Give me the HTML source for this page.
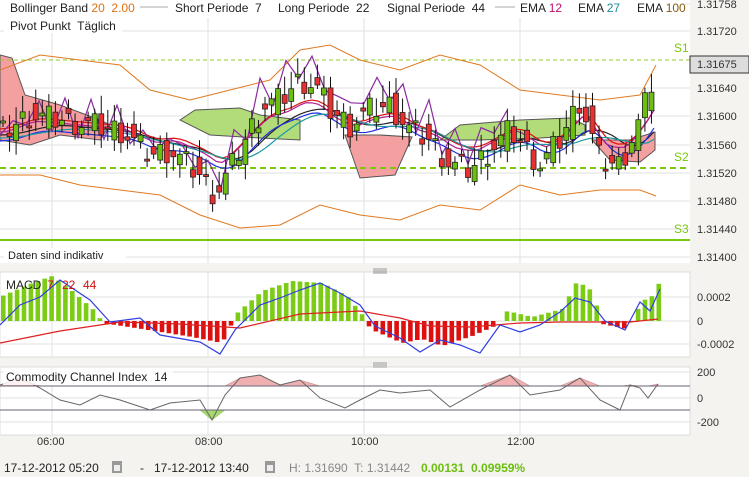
<!DOCTYPE html>
<html><head><meta charset="utf-8"><style>
body{margin:0;width:749px;height:477px;overflow:hidden;background:#f4f3ef;font-family:"Liberation Sans",sans-serif;}
svg{position:absolute;left:0;top:0}
text{font-family:"Liberation Sans",sans-serif;white-space:pre}
</style></head><body>
<svg id="s" width="749" height="477" xmlns="http://www.w3.org/2000/svg">
<rect x="0" y="0" width="690" height="263" fill="#fff"/>
<rect x="0" y="272" width="690" height="85" fill="#fff" stroke="#ddd"/>
<rect x="0" y="367" width="690" height="68" fill="#fff" stroke="#ddd"/>
<g id="grid" stroke="#e2e2e2" stroke-width="1"></g>
<g id="main"></g>
<g font-size="12" fill="#222">
<rect x="0" y="0" width="685" height="17" fill="#fff"/>
<text x="10" y="12">Bollinger Band <tspan fill="#e07010">20  2.00</tspan></text>
<line x1="140" x2="168" y1="7" y2="7" stroke="#aaa"/>
<text x="175" y="12">Short Periode  7</text>
<text x="278" y="12">Long Periode  22</text>
<text x="387" y="12">Signal Periode  44</text>
<line x1="495" x2="515" y1="7" y2="7" stroke="#aaa"/>
<text x="520" y="12">EMA <tspan fill="#c0106a">12</tspan></text>
<text x="578" y="12">EMA <tspan fill="#1a8a9a">27</tspan></text>
<text x="637" y="12">EMA <tspan fill="#8a5a10">100</tspan></text>
<rect x="4" y="18" width="118" height="15" fill="#fff"/>
<text x="10" y="30">Pivot Punkt  Täglich</text>
<rect x="4" y="248" width="122" height="13" fill="#fff"/>
<text x="8" y="259" font-size="11">Daten sind indikativ</text>
<text x="674" y="52" fill="#7ac70c">S1</text>
<text x="674" y="161" fill="#7ac70c">S2</text>
<text x="674" y="233" fill="#7ac70c">S3</text>
</g>
<g font-size="11" fill="#333">
<text x="697" y="8">1.31758</text><text x="697" y="35">1.31720</text>
<rect x="690" y="56" width="59" height="17" fill="#ddd" stroke="#333"/>
<text x="697" y="68">1.31675</text>
<text x="697" y="92">1.31640</text><text x="697" y="120">1.31600</text><text x="697" y="149">1.31560</text><text x="697" y="177">1.31520</text><text x="697" y="205">1.31480</text><text x="697" y="233">1.31440</text><text x="697" y="261">1.31400</text>
<text x="697" y="301">0.0002</text><text x="697" y="325">0</text><text x="697" y="348">-0.0002</text>
<text x="697" y="376">200</text><text x="697" y="402">0</text><text x="697" y="426">-200</text>
<text x="37" y="445">06:00</text><text x="195" y="445">08:00</text><text x="351" y="445">10:00</text><text x="507" y="445">12:00</text>
</g>
<g stroke="#999"><line x1="373" x2="387" y1="269" y2="269"/><line x1="373" x2="387" y1="271" y2="271"/><line x1="373" x2="387" y1="273" y2="273"/>
<line x1="373" x2="387" y1="363" y2="363"/><line x1="373" x2="387" y1="365" y2="365"/><line x1="373" x2="387" y1="367" y2="367"/></g>
<g font-size="12">
<text x="6" y="289" fill="#222">MACD</text><text x="47" y="289" fill="#d01010">7</text><text x="62" y="289" fill="#d01010">22</text><text x="83" y="289" fill="#d01010">44</text>
<rect x="3" y="369" width="170" height="16" fill="#fff" opacity=".85"/>
<text x="6" y="381" fill="#222">Commodity Channel Index  14</text>
<text x="4" y="472" fill="#222">17-12-2012 05:20</text>
<rect x="112" y="461" width="10" height="12" fill="#999"/><rect x="114" y="465" width="6" height="6" fill="#eee"/>
<text x="140" y="472" fill="#222">-   17-12-2012 13:40</text>
<rect x="265" y="461" width="10" height="12" fill="#999"/><rect x="267" y="465" width="6" height="6" fill="#eee"/>
<text x="289" y="472" fill="#888">H: 1.31690  T: 1.31442</text>
<text x="421" y="472" fill="#6cbf10" font-weight="bold">0.00131  0.09959%</text>
</g>
</svg>
<script>
(function(){
var NS="http://www.w3.org/2000/svg",M=document.getElementById('main'),G=document.getElementById('grid');
function el(t,a,p){var e=document.createElementNS(NS,t);for(var k in a)e.setAttribute(k,a[k]);(p||M).appendChild(e);return e;}
[4,31,88,116,145,173,201,229,257,297,321,344,372,386,398,410,422].forEach(function(y){el('line',{x1:0,x2:690,y1:y,y2:y},G)});
[52,208,364,520].forEach(function(x){el('line',{x1:x,x2:x,y1:18,y2:263},G);el('line',{x1:x,x2:x,y1:272,y2:357},G);el('line',{x1:x,x2:x,y1:367,y2:435},G)});
function interp(pts,x){if(x<=pts[0][0])return pts[0][1];for(var i=0;i<pts.length-1;i++){if(x<=pts[i+1][0]){var t=(x-pts[i][0])/(pts[i+1][0]-pts[i][0]);return pts[i][1]+t*(pts[i+1][1]-pts[i][1]);}}return pts[pts.length-1][1];}
function path(pts,c,w,fill){var d='M'+pts.map(function(p){return p[0]+','+p[1]}).join('L');return el('path',{d:d,stroke:c,'stroke-width':w||1,fill:fill||'none'});}
function poly(up,lo,c){var d='M'+up.map(function(p){return p[0]+','+p[1]}).join('L')+'L'+lo.slice().reverse().map(function(p){return p[0]+','+p[1]}).join('L')+'Z';el('path',{d:d,fill:c,stroke:'#555','stroke-width':1});}
poly([[0,55],[12,58],[25,95],[60,105],[100,120],[110,125]],[[0,140],[30,145],[60,135],[100,140],[110,125]],'#f5a0a0');
poly([[180,120],[195,110],[240,108],[260,115],[300,120]],[[180,120],[210,135],[260,138],[300,140]],'#b2dc7a');
poly([[345,135],[380,135],[412,137]],[[345,135],[360,178],[395,175],[412,137]],'#f5a0a0');
poly([[440,140],[460,125],[520,120],[570,118],[585,125]],[[440,140],[480,140],[540,138],[585,135]],'#b2dc7a');
poly([[592,140],[630,140],[655,132]],[[592,140],[610,160],[640,162],[655,150]],'#f5a0a0');
el('line',{x1:0,x2:690,y1:60,y2:60,stroke:'#8ccc30','stroke-dasharray':'4,3'});
el('line',{x1:0,x2:690,y1:168,y2:168,stroke:'#7ac70c','stroke-width':2,'stroke-dasharray':'6,4'});
el('line',{x1:0,x2:690,y1:240,y2:240,stroke:'#7ac70c','stroke-width':2});
var P=[[0,135],[30,115],[60,120],[90,125],[120,130],[150,155],[170,150],[200,175],[215,195],[230,170],[250,130],[265,105],[280,100],[300,80],[315,85],[330,110],[350,125],[370,110],[390,105],[410,130],[430,140],[450,165],[470,170],[490,150],[510,130],[540,165],[560,140],[580,100],[600,160],[620,165],[640,120],[656,70]];
path([[0,70],[40,55],[80,60],[120,65],[150,90],[190,100],[230,90],[270,80],[300,50],[330,45],[360,60],[400,70],[440,55],[480,65],[520,90],[560,95],[600,100],[640,95],[656,65]],'#e07a20');
path([[0,175],[40,175],[80,185],[120,190],[160,195],[200,215],[240,228],[280,225],[320,205],[360,215],[400,220],[440,205],[480,210],[520,185],[560,195],[600,190],[640,190],[656,196]],'#e07a20');
var lines=[['#222',0,40],['#2030e0',6,24],['#e01010',-6,16],['#b02090',-3,10],['#1a9aa0',3,56]];
lines.forEach(function(l){var pts=[];for(var x=0;x<=656;x+=6){var s=0,n=0;for(var k=-l[2];k<=0;k+=4){s+=interp(P,x+k);n++;}pts.push([x,(s/n)*0.55+135*0.45+l[1]]);}path(pts,l[0],1.2);});
var pu=[];for(var x=0;x<=516;x+=13){pu.push([x,interp(P,x)+40*Math.sin(x*0.37)*Math.cos(x*0.11)]);}path(pu,'#8a2aa0',1.2);
for(var i=0;i<100;i++){var cx=3+i*6.55;var c=interp(P,cx)+((i*5)%7-3)*4,o=interp(P,cx-6.55)+((i*7)%5-2)*6;var up=c<o;var tp=Math.min(o,c),bt=Math.max(o,c);if(bt-tp<2)bt=tp+2;
el('line',{x1:cx,x2:cx,y1:tp-5-((i*13)%14),y2:bt+4+((i*11)%12),stroke:'#111'});
el('rect',{x:cx-2.5,y:tp,width:5,height:bt-tp,fill:up?'#6cbf10':'#e83030',stroke:'#222','stroke-width':.8});}
var MV=[[0,-25],[30,-38],[50,-45],[70,-30],[95,-8],[100,2],[140,8],[190,16],[220,22],[235,-8],[260,-30],[290,-40],[320,-38],[345,-25],[362,-4],[368,8],[400,22],[420,18],[440,25],[470,15],[495,4],[505,-10],[530,-4],[560,-12],[575,-40],[590,-30],[600,3],[625,8],[640,-20],[650,-25],[658,-40]];
for(var i=0;i<96;i++){var bx=1+i*6.9;var v=interp(MV,bx);
el('rect',{x:bx,y:Math.min(321+v,321),width:4.6,height:Math.abs(v),fill:v<0?'#7ccb14':'#dd1010'});}
path([[0,343],[60,331],[120,322],[180,324],[240,328],[300,314],[360,311],[400,318],[430,326],[470,327],[520,323],[560,322],[600,322],[630,322],[658,319]],'#e02020',1.2);
path([[0,325],[20,305],[40,297],[60,280],[90,300],[110,322],[140,318],[160,335],[200,342],[220,354],[235,330],[260,305],[280,298],[300,290],[320,283],[340,293],[360,305],[375,326],[400,338],[420,352],[440,340],[460,345],[480,353],[500,325],[520,332],[540,325],[560,312],[575,298],[590,302],[605,321],[625,330],[640,302],[650,311],[660,289]],'#3040e0',1.2);
var cc=[[0,385],[20,378],[40,388],[60,400],[80,405],[100,395],[120,400],[150,410],[170,403],[200,400],[212,420],[225,395],[240,378],[260,375],[280,385],[300,380],[320,398],[345,408],[360,400],[380,390],[400,393],[430,390],[450,407],[480,390],[510,375],[530,395],[560,390],[580,378],[600,400],[620,410],[630,385],[640,388],[648,398],[658,384]];
path([[0,386]].concat(cc.map(function(p){return [p[0],Math.min(p[1],386)]})).concat([[658,386]]),'#c88','0.6','#f0b0b0');
path([[0,410]].concat(cc.map(function(p){return [p[0],Math.max(p[1],410)]})).concat([[658,410]]),'#9c6',0.6,'#a8d870');
el('line',{x1:0,x2:690,y1:386,y2:386,stroke:'#667'});el('line',{x1:0,x2:690,y1:410,y2:410,stroke:'#667'});
path(cc,'#666',1);
})();
</script>
</body></html>
